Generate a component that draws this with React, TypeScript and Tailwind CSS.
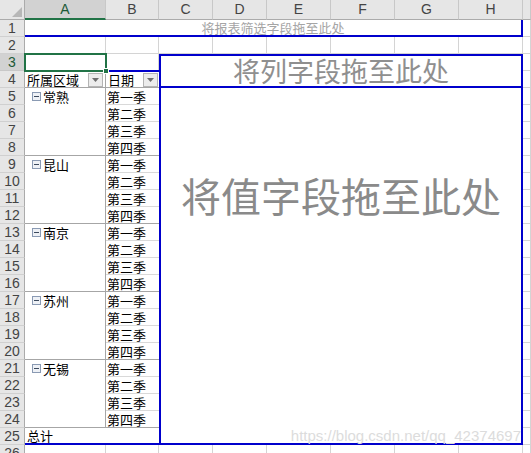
import React from 'react';

const cols = ['A', 'B', 'C', 'D', 'E', 'F', 'G', 'H', ''];
const regions = ['常熟', '昆山', '南京', '苏州', '无锡'];
const quarters = ['第一季', '第二季', '第三季', '第四季'];
const rowNums = Array.from({ length: 26 }, (_, i) => i + 1);

const Dropdown = () => (
  <span className="flex h-[14px] w-[15px] items-center justify-center border border-[#b4b4b4] bg-[#ececec]">
    <svg width="7" height="4" viewBox="0 0 7 4">
      <path d="M0 0h7L3.5 4z" fill="#6e6e6e" />
    </svg>
  </span>
);

const MinusBox = () => (
  <span className="flex h-[9px] w-[9px] shrink-0 items-center justify-center border border-[#8a9ab3] bg-[#eef1f6]">
    <span className="h-px w-[5px] bg-[#3c4a5e]" />
  </span>
);

const App = () => {
  return (
    <div className="grid h-[453px] w-[531px] overflow-hidden bg-white font-['Noto_Sans_CJK_SC',sans-serif] text-[13px] leading-[17px] text-black">
      {/* sheet grid */}
      <div className="col-start-1 row-start-1 grid grid-cols-[25px_81px_53px_54px_54px_64px_64px_64px_64px_1fr] grid-rows-[20px_repeat(25,17px)_1fr] font-['Liberation_Sans',sans-serif]">
        <div className="flex items-end justify-end border-r border-b border-[#ababab] bg-[#e6e6e6] pr-[2px] pb-[2px]">
          <svg width="10" height="10" viewBox="0 0 10 10">
            <path d="M10 0v10H0z" fill="#b7b7b7" />
          </svg>
        </div>
        {cols.map((c, i) => (
          <div
            key={'h' + i}
            className={
              c === 'A'
                ? 'flex items-center justify-center border-r border-b-2 border-r-[#c8c8c8] border-b-[#217346] bg-[#d2d2d2] text-[14px] text-[#1d5a37]'
                : 'flex items-center justify-center border-r border-b border-r-[#c8c8c8] border-b-[#ababab] bg-[#e6e6e6] text-[14px] text-[#444]'
            }
          >
            {c}
          </div>
        ))}
        {rowNums.map((r) => (
          <React.Fragment key={'r' + r}>
            <div
              className={
                r === 3
                  ? 'flex items-center justify-center border-r border-b border-r-[#ababab] border-b-[#c8c8c8] bg-[#d2d2d2] text-[14px] text-[#1d5a37]'
                  : 'flex items-center justify-center border-r border-b border-r-[#ababab] border-b-[#d0d0d0] bg-[#e6e6e6] text-[14px] text-[#444]'
              }
            >
              {r}
            </div>
            {cols.map((_, i) => (
              <div key={'c' + r + i} className="border-r border-b border-[#d4d4d4]" />
            ))}
          </React.Fragment>
        ))}
      </div>

      {/* pivot table */}
      <div className="col-start-1 row-start-1 grid grid-cols-[25px_81px_53px_54px_54px_64px_64px_64px_64px_1fr] grid-rows-[20px_repeat(25,17px)_1fr]">
        <div className="col-span-8 col-start-2 row-start-2 flex items-center justify-center border-r-2 border-b-2 border-[#0000cc] bg-white text-[13px] text-[#a5a5a5]">
          将报表筛选字段拖至此处
        </div>

        <div className="col-span-6 col-start-4 row-span-2 row-start-4 flex items-center justify-center border-2 border-[#0000cc] bg-white text-[27px] leading-[30px] text-[#8f8f8f]">
          将列字段拖至此处
        </div>

        <div className="col-span-6 col-start-4 row-span-21 row-start-6 border-x-2 border-b-2 border-[#0000cc] bg-white pt-[83px] text-center text-[40px] leading-[48px] text-[#8a8a8a]">
          将值字段拖至此处
        </div>

        <div className="col-start-2 row-start-5 -mt-px flex items-center justify-between border-t-2 border-r border-b border-t-[#0000cc] border-r-[#a6a6a6] border-b-[#a6a6a6] bg-white pr-[2px] pl-[2px]">
          <span>所属区域</span>
          <Dropdown />
        </div>
        <div className="col-start-3 row-start-5 -mt-px flex items-center justify-between border-t-2 border-b border-t-[#0000cc] border-b-[#a6a6a6] bg-white pr-[1px] pl-[2px]">
          <span>日期</span>
          <Dropdown />
        </div>

        <div className="col-span-2 col-start-2 row-span-20 row-start-6 flex flex-col bg-white">
          {regions.map((name) => (
            <div key={name} className="flex h-[68px] border-b border-[#a6a6a6]">
              <div className="flex h-full w-[81px] items-start border-r border-[#a6a6a6]">
                <div className="flex h-[17px] items-center gap-[2px] pl-[7px]">
                  <MinusBox />
                  <span>{name}</span>
                </div>
              </div>
              <div className="flex flex-1 flex-col">
                {quarters.map((q, i) => (
                  <div
                    key={q}
                    className={
                      i < 3
                        ? 'flex h-[17px] items-center border-b border-[#d9d9d9] pl-[1px]'
                        : 'flex flex-1 items-center pl-[1px]'
                    }
                  >
                    {q}
                  </div>
                ))}
              </div>
            </div>
          ))}
        </div>

        <div className="col-span-2 col-start-2 row-start-26 flex items-center border-b-2 border-[#0000cc] bg-white pl-[2px]">
          总计
        </div>

        <div className="relative z-10 col-start-2 row-start-4 -m-px border-2 border-[#217346]">
          <span className="absolute -right-[4px] -bottom-[4px] h-[6px] w-[6px] border border-white bg-[#217346]" />
        </div>

        <div className="pointer-events-none col-span-6 col-start-4 row-start-26 flex items-center justify-end pr-[2px] pb-[3px] font-['Liberation_Sans',sans-serif] text-[15px] text-[#dcdcdc]">
          https://blog.csdn.net/qq_42374697
        </div>
      </div>
    </div>
  );
};

export default App;
